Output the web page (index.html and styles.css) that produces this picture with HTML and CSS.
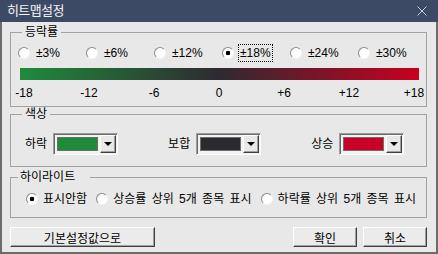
FILE: index.html
```html
<!DOCTYPE html>
<html lang="ko">
<head>
    <meta charset="UTF-8">
    <title>히트맵설정</title>
    <link rel="stylesheet" href="styles.css">
</head>
<body>
    <div class="window">
        <div class="titlebar">
            <span class="title">히트맵설정</span>
            <svg class="close" width="10" height="10" viewBox="0 0 10 10">
                <path d="M0.5 0.5 L9.5 9.5 M9.5 0.5 L0.5 9.5" stroke="#c9cdd6" stroke-width="1" fill="none"/>
            </svg>
        </div>
        <div class="content">
            <div class="group">
                <div class="group-title">등락률</div>
                <div class="rate-options">
                    <label class="opt"><span class="radio"></span><span>±3%</span></label>
                    <label class="opt"><span class="radio"></span><span>±6%</span></label>
                    <label class="opt"><span class="radio"></span><span>±12%</span></label>
                    <label class="opt"><span class="radio checked"></span><span class="focus">±18%</span></label>
                    <label class="opt"><span class="radio"></span><span>±24%</span></label>
                    <label class="opt"><span class="radio"></span><span>±30%</span></label>
                </div>
                <div class="gradient-bar"></div>
                <div class="scale">
                    <span>-18</span><span>-12</span><span>-6</span><span>0</span><span>+6</span><span>+12</span><span>+18</span>
                </div>
            </div>

            <div class="group group-color">
                <div class="group-title">색상</div>
                <div class="color-row">
                    <div class="color-item">
                        <span>하락</span>
                        <div class="combo"><span class="swatch down"></span><span class="drop"></span></div>
                    </div>
                    <div class="color-item">
                        <span>보합</span>
                        <div class="combo"><span class="swatch flat"></span><span class="drop"></span></div>
                    </div>
                    <div class="color-item">
                        <span>상승</span>
                        <div class="combo"><span class="swatch up"></span><span class="drop"></span></div>
                    </div>
                </div>
            </div>

            <div class="group group-highlight">
                <div class="group-title wide">하이라이트</div>
                <div class="hl-options">
                    <label class="hl-opt"><span class="radio checked"></span><span>표시안함</span></label>
                    <label class="hl-opt"><span class="radio"></span><span>상승률 상위 5개 종목 표시</span></label>
                    <label class="hl-opt"><span class="radio"></span><span>하락률 상위 5개 종목 표시</span></label>
                </div>
            </div>

            <div class="buttons">
                <button class="btn btn-default">기본설정값으로</button>
                <div class="btn-pair">
                    <button class="btn">확인</button>
                    <button class="btn">취소</button>
                </div>
            </div>
        </div>
    </div>
</body>
</html>
```

FILE: styles.css
```css
body {
    margin: 0;
    padding: 0;
    font-family: "Liberation Sans", "Noto Sans CJK KR", sans-serif;
    font-size: 12px;
    line-height: 14px;
    color: #000;
}
.window {
    width: 438px;
    height: 254px;
    display: flex;
    flex-direction: column;
}
.titlebar {
    height: 22px;
    flex: none;
    background-color: #3c4a66;
    color: #f4f4f4;
    display: flex;
    align-items: center;
    justify-content: space-between;
    padding: 0 11px 0 7px;
}
.title {
    font-size: 13px;
    letter-spacing: -0.6px;
}
.content {
    flex: 1;
    background-color: #e8e8e8;
    border: 2px solid #6b6b6b;
    border-top: none;
    padding: 0 9px 0 8px;
}
.group {
    border: 1px solid #a3a3a3;
    margin-top: 10px;
    padding-bottom: 6px;
}
.group-title {
    width: fit-content;
    margin: -8px 0 0 11px;
    padding: 0 3px;
    line-height: 15px;
    background-color: #e8e8e8;
}
.group-title.wide {
    margin-left: 7px;
    padding: 0 15px 0 2px;
}
.rate-options {
    display: flex;
    margin-top: 6px;
    padding-left: 7px;
}
.opt {
    width: 70px;
    display: flex;
    align-items: center;
    gap: 6px;
}
.radio {
    width: 12px;
    height: 12px;
    box-sizing: border-box;
    border-radius: 50%;
    border: 1px solid;
    border-color: #8a8a8a #f6f6f6 #f6f6f6 #8a8a8a;
    background-color: #fff;
    flex: none;
}
.radio.checked {
    background: radial-gradient(circle, #000 2px, #fff 2.6px);
}
.focus {
    outline: 1px dotted #000;
    outline-offset: 1px;
}
.gradient-bar {
    height: 12px;
    margin: 8px 7px 0 9px;
    background: linear-gradient(to right, #1f8b3b, #2e2a31 50%, #c8001f);
}
.scale {
    display: flex;
    justify-content: space-between;
    margin-top: 6px;
    padding: 0 12px 0 13px;
}
.scale span {
    width: 0;
    display: flex;
    justify-content: center;
    white-space: nowrap;
}
.group-color {
    margin-top: 7px;
    padding-bottom: 11px;
}
.color-row {
    display: flex;
    gap: 50px;
    margin-top: 11px;
    padding-left: 14px;
}
.color-item {
    display: flex;
    align-items: center;
    gap: 6px;
}
.combo {
    width: 65px;
    height: 22px;
    box-sizing: border-box;
    display: flex;
    gap: 2px;
    padding: 1px;
    border: 1px solid;
    border-color: #9c9c9c #fdfdfd #fdfdfd #9c9c9c;
    box-shadow: inset 1px 1px #6a6a6a;
    background-color: #f2f2f2;
}
.swatch {
    flex: 1;
    margin: 2px 0 2px 2px;
    border: 1px solid #6e6e6e;
}
.swatch.down {
    background-color: #1f8b3b;
}
.swatch.flat {
    background-color: #2d2930;
}
.swatch.up {
    background-color: #c8002a;
}
.drop {
    width: 16px;
    box-sizing: border-box;
    border: 1px solid;
    border-color: #fff #404040 #404040 #fff;
    box-shadow: inset -1px -1px #a0a0a0;
    background-color: #e8e8e8;
    display: flex;
    align-items: center;
    justify-content: center;
}
.drop::after {
    content: "";
    border-left: 4px solid transparent;
    border-right: 4px solid transparent;
    border-top: 4px solid #000;
}
.group-highlight {
    padding-bottom: 11px;
}
.hl-options {
    display: flex;
    gap: 9px;
    margin-top: 7px;
    padding-left: 15px;
}
.hl-opt {
    display: flex;
    align-items: center;
    gap: 5px;
    word-spacing: 2px;
}
.buttons {
    display: flex;
    justify-content: space-between;
    margin-top: 9px;
}
.btn {
    height: 20px;
    width: 64px;
    box-sizing: border-box;
    padding: 0;
    font-family: inherit;
    font-size: 12px;
    color: #000;
    background-color: #ebebeb;
    border: 1px solid;
    border-color: #fff #404040 #404040 #fff;
    box-shadow: inset -1px -1px #a0a0a0;
}
.btn-default {
    width: 145px;
}
.btn-pair {
    display: flex;
    gap: 6px;
}
```
